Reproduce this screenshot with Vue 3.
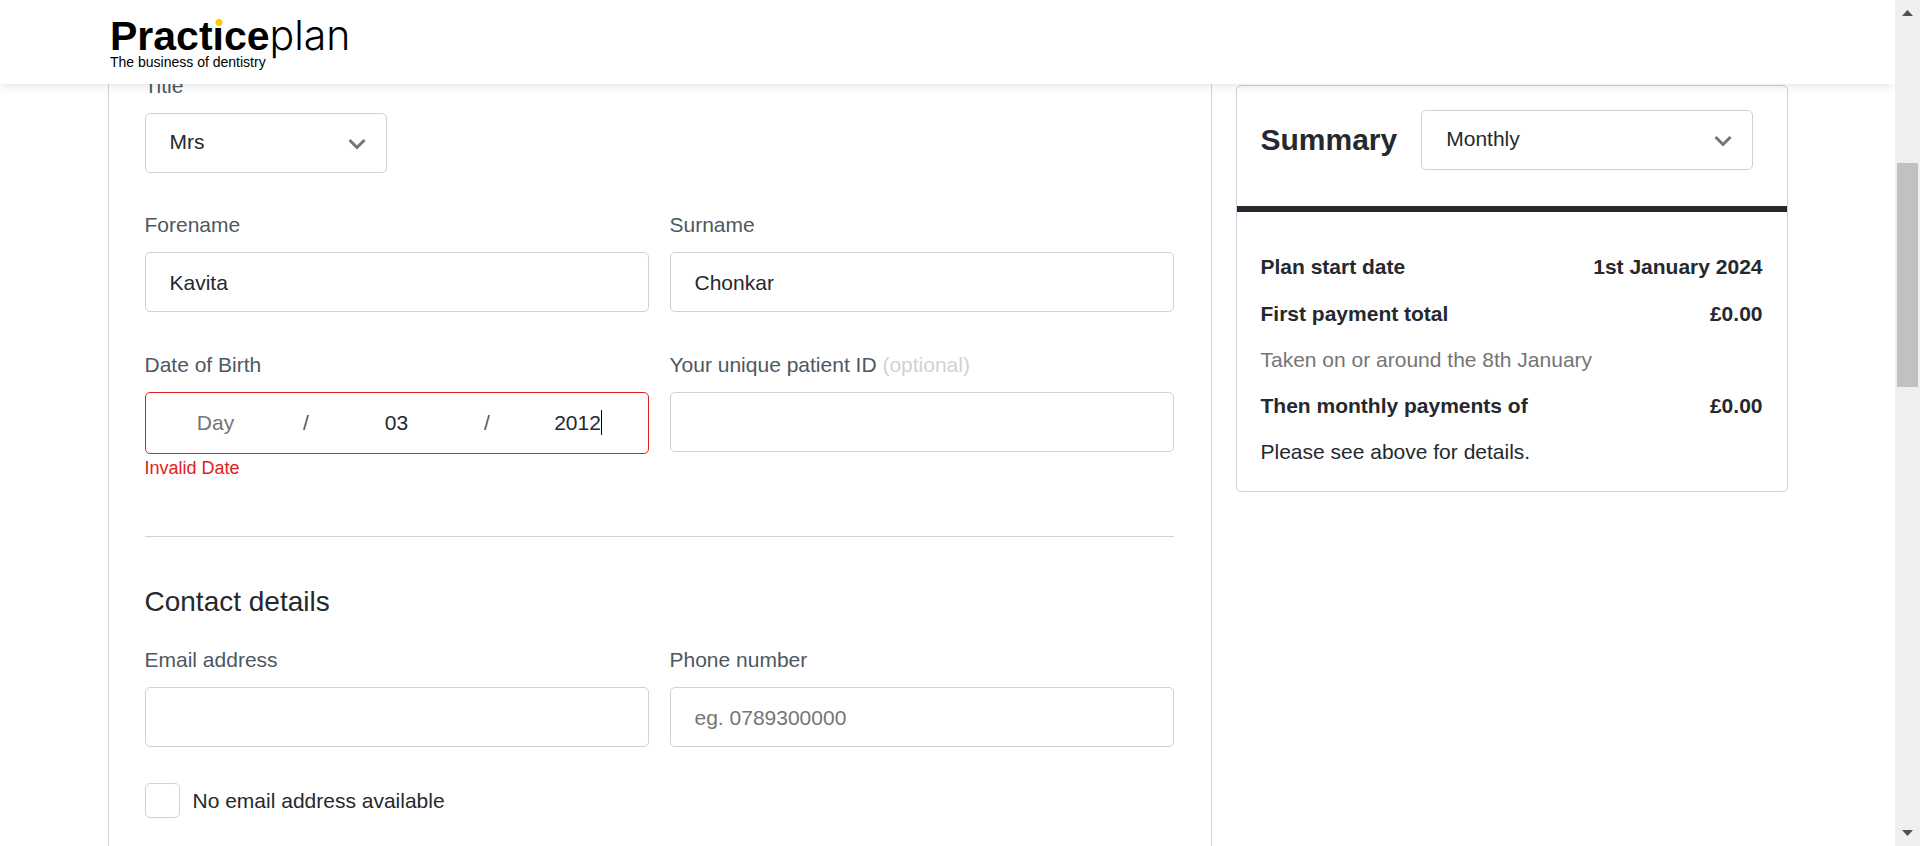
<script setup>
import { ref } from 'vue'

const title = ref('Mrs')
const forename = ref('Kavita')
const surname = ref('Chonkar')
const day = ref('')
const month = ref('03')
const year = ref('2012')
const patientId = ref('')
const email = ref('')
const phone = ref('')
const noEmail = ref(false)
const frequency = ref('Monthly')
</script>

<template>
  <div class="app">
    <div class="page">
      <header class="topbar">
        <a class="logo" href="#" aria-label="Practiceplan, The business of dentistry">
          <span class="wordmark"><b>Pract<span class="dot-i">i</span>ce</b><span class="thin">plan</span></span>
          <span class="tagline">The business of dentistry</span>
        </a>
      </header>

      <main class="layout">
        <form class="panel" @submit.prevent>
          <div class="field title-field">
            <label for="title">Title</label>
            <div class="select">
              <select id="title" v-model="title">
                <option>Mrs</option>
                <option>Mr</option>
                <option>Miss</option>
              </select>
              <svg width="18" height="12" viewBox="0 0 18 12" aria-hidden="true"><path d="M1.500 2 L9 9.500 L16.500 2" /></svg>
            </div>
          </div>

          <div class="grid">
            <div class="field">
              <label for="forename">Forename</label>
              <input id="forename" v-model="forename" class="box" type="text" />
            </div>
            <div class="field">
              <label for="surname">Surname</label>
              <input id="surname" v-model="surname" class="box" type="text" />
            </div>
            <div class="field">
              <label for="day">Date of Birth</label>
              <div class="date">
                <input id="day" v-model="day" type="text" placeholder="Day" aria-label="Day" />
                <span class="slash">/</span>
                <input v-model="month" type="text" placeholder="Month" aria-label="Month" />
                <span class="slash">/</span>
                <div class="year">
                  <input v-model="year" type="text" placeholder="Year" aria-label="Year" />
                  <span class="caret"></span>
                </div>
              </div>
              <p class="error">Invalid Date</p>
            </div>
            <div class="field">
              <label for="patient">Your unique patient ID <span class="optional">(optional)</span></label>
              <input id="patient" v-model="patientId" class="box" type="text" />
            </div>
          </div>

          <hr />

          <h2>Contact details</h2>
          <div class="grid">
            <div class="field">
              <label for="email">Email address</label>
              <input id="email" v-model="email" class="box" type="email" />
            </div>
            <div class="field">
              <label for="phone">Phone number</label>
              <input id="phone" v-model="phone" class="box" type="tel" placeholder="eg. 0789300000" />
            </div>
          </div>
          <div class="check">
            <input id="no-email" v-model="noEmail" type="checkbox" />
            <label for="no-email">No email address available</label>
          </div>
        </form>

        <aside class="summary">
          <div class="summary-head">
            <h2>Summary</h2>
            <div class="select">
              <select v-model="frequency" aria-label="Payment frequency">
                <option>Monthly</option>
                <option>Annually</option>
              </select>
              <svg width="18" height="12" viewBox="0 0 18 12" aria-hidden="true"><path d="M1.500 2 L9 9.500 L16.500 2" /></svg>
            </div>
          </div>
          <div class="summary-body">
            <div class="row first"><span>Plan start date</span><span>1st January 2024</span></div>
            <div class="row"><span>First payment total</span><span>£0.00</span></div>
            <p class="muted">Taken on or around the 8th January</p>
            <div class="row"><span>Then monthly payments of</span><span>£0.00</span></div>
            <p>Please see above for details.</p>
          </div>
        </aside>
      </main>
    </div>

    <div class="scrollbar" aria-hidden="true">
      <svg width="11" height="6" viewBox="0 0 11 6"><path d="M0 6 L5.500 0 L11 6 Z" /></svg>
      <div class="track"><div class="thumb"></div></div>
      <svg width="11" height="6" viewBox="0 0 11 6"><path d="M0 0 L5.500 6 L11 0 Z" /></svg>
    </div>
  </div>
</template>

<style>
body {
  background: #fff;
}
</style>

<style scoped>
* {
  box-sizing: border-box;
}
.app {
  display: flex;
  height: 100vh;
  overflow: hidden;
  font-family: "Liberation Sans", Arial, sans-serif;
  font-size: 21px;
  line-height: 28px;
  color: #25292e;
}
.page {
  flex: 1;
  min-width: 0;
  position: relative;
  overflow: hidden;
}
.topbar {
  position: absolute;
  inset: 0 0 auto 0;
  z-index: 2;
  height: 84px;
  padding: 16px 110px;
  background: #fff;
  box-shadow: 0 1px 10px rgba(0, 0, 0, 0.12);
}
.logo {
  display: inline-flex;
  flex-direction: column;
  color: #000;
  text-decoration: none;
}
.wordmark {
  display: flex;
  align-items: baseline;
  font-size: 41px;
  line-height: 38px;
}
.dot-i {
  position: relative;
}
.dot-i::before {
  content: "";
  position: absolute;
  left: 1px;
  top: 5px;
  width: 10px;
  height: 9px;
  background: radial-gradient(circle at center, #ffc800 3px, #fff 4px);
}
.thin {
  font-family: Inter, "Liberation Sans", sans-serif;
  font-weight: 300;
}
.tagline {
  font-size: 14px;
  line-height: 14px;
}
.layout {
  display: grid;
  grid-template-columns: 2fr 1fr;
  gap: 24px;
  align-items: start;
  max-width: 1680px;
  margin: 0 auto;
}
.panel {
  min-height: 100vh;
  padding: 72px 37px 36px 36px;
  border: solid #cdd1d9;
  border-width: 0 1px;
}
.field {
  display: flex;
  flex-direction: column;
}
.field label {
  margin-bottom: 13px;
  color: #4d5862;
}
.optional {
  color: #cdd3da;
}
.title-field {
  width: 242px;
  margin-bottom: 38px;
}
.grid {
  display: grid;
  grid-template-columns: 1fr 1fr;
  gap: 39px 21px;
}
input,
select {
  font: inherit;
  color: inherit;
  margin: 0;
  min-width: 0;
}
input::placeholder {
  color: #757575;
  opacity: 1;
}
.box,
select {
  width: 100%;
  height: 60px;
  padding: 2px 24px 0;
  border: 1px solid #cdd1d9;
  border-radius: 5px;
  background: #fff;
  outline: none;
}
select {
  appearance: none;
  padding: 0 24px 3px;
}
.select {
  display: grid;
  flex: 1;
  align-items: center;
}
.select > * {
  grid-area: 1 / 1;
}
.select svg {
  justify-self: end;
  margin-right: 21px;
  margin-top: 2px;
  pointer-events: none;
  fill: none;
  stroke: #757575;
  stroke-width: 3;
}
.date {
  display: flex;
  align-items: center;
  height: 62px;
  border: 1px solid #e02020;
  border-radius: 5px;
}
.date input {
  flex: 1;
  width: 100%;
  padding: 0;
  border: 0;
  outline: none;
  background: none;
  text-align: center;
}
.slash {
  width: 41px;
  text-align: center;
  color: #4d5862;
}
.year {
  flex: 1;
  min-width: 0;
  display: flex;
  position: relative;
}
.caret {
  position: absolute;
  left: calc(50% + 23px);
  top: 1px;
  width: 1px;
  height: 25px;
  background: #000;
}
.error {
  margin: 2px 0 0;
  font-size: 18px;
  line-height: 24px;
  color: #e02020;
}
hr {
  height: 1px;
  margin: 56px 0 47px;
  border: 0;
  background: #cdd1d9;
}
h2 {
  margin: 0;
  font-size: 28px;
  line-height: 36px;
  font-weight: 400;
}
.panel h2 {
  margin-bottom: 26px;
}
.check {
  display: flex;
  align-items: center;
  gap: 13px;
  margin-top: 36px;
}
.check input {
  appearance: none;
  width: 35px;
  height: 35px;
  border: 1px solid #cdd1d9;
  border-radius: 5px;
}
.summary {
  margin-top: 85px;
  border: 1px solid #cdd1d9;
  border-radius: 5px;
}
.summary-head {
  display: flex;
  align-items: center;
  gap: 24px;
  padding: 24px 34px 36px 24px;
  border-bottom: 6px solid #25292e;
}
.summary-head h2 {
  font-size: 30px;
  font-weight: 700;
}
.summary-body {
  display: flex;
  flex-direction: column;
  gap: 18px;
  padding: 41px 24px 25px;
}
.summary-body p {
  margin: 0;
}
.row {
  display: flex;
  justify-content: space-between;
  font-weight: 700;
}
.first {
  margin-bottom: 1px;
}
.summary-body .muted {
  color: #757575;
}
.scrollbar {
  display: flex;
  flex-direction: column;
  align-items: center;
  width: 25px;
  padding: 10px 2px;
  background: #f0f0f0;
}
.scrollbar svg {
  flex: none;
  fill: #505050;
}
.track {
  flex: 1;
  width: 100%;
  padding-top: 147px;
}
.thumb {
  height: 224px;
  background: #c1c1c1;
}
</style>
